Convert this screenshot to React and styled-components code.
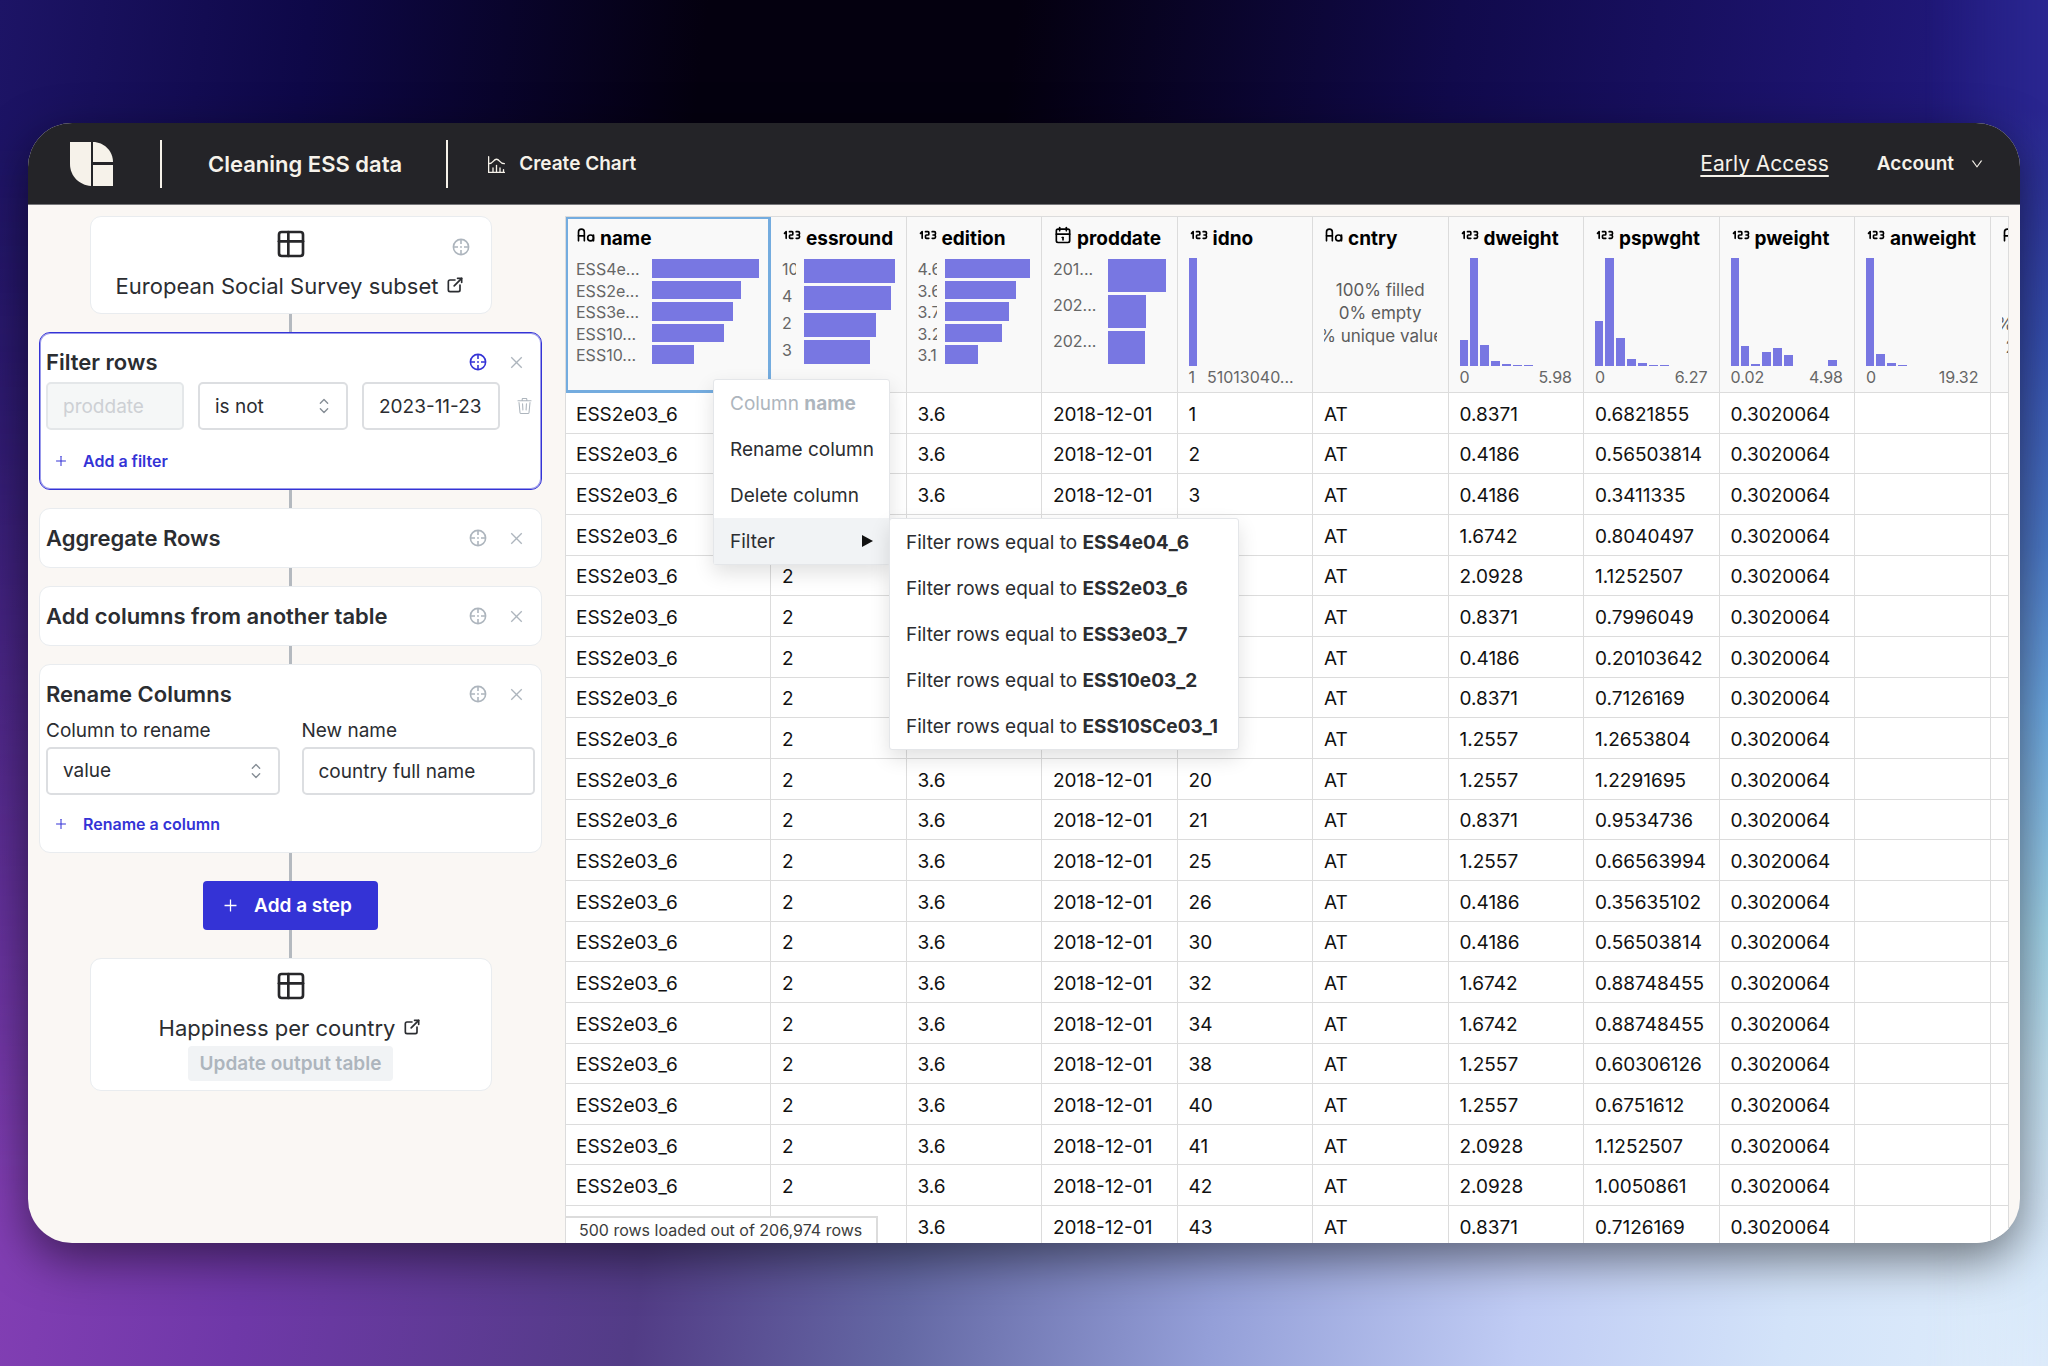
import React, { useState } from "react";
import styled, { createGlobalStyle, css } from "styled-components";
import {
  TbCalendar,
  TbChartHistogram,
  TbExternalLink,
  TbLetterCase,
  TbSelector,
  TbTable,
} from "react-icons/tb";
import { AiOutlineClose, AiOutlineDown, AiOutlinePlus } from "react-icons/ai";
import { GoTrash } from "react-icons/go";

const colors = {
  ink: "#27272a",
  cream: "#f6f2ea",
  text: "#2b2d31",
  muted: "#adb5bd",
  line: "#dcdcdc",
  accent: "#3433d6",
  bar: "#7877e2",
};

const GlobalStyle = createGlobalStyle`
  * { box-sizing: border-box; }
  body { margin: 0; font-family: Inter, "Liberation Sans", sans-serif; color: ${colors.text}; }
  button, input, select { font: inherit; color: inherit; margin: 0; }
`;

/* ---------- page and window ---------- */

const Page = styled.div`
  position: relative;
  display: flex;
  height: 100vh;
  padding: 123px 28px;
  background: linear-gradient(97deg, #8d42ba 0%, #6f38a8 18%, #523c86 36%, #6468a4 48%, #949fd8 62%, #c0ccf4 76%, #d3e3f9 88%, #dfedfb 100%);

  &::before,
  &::after {
    content: "";
    position: absolute;
    inset: 0;
  }

  &::before {
    background: linear-gradient(97deg, #1d1466 0%, #0e0848 14%, #04000f 32%, #04000f 46%, #110a4c 66%, #1d1470 84%, #26228e 100%);
    mask-image: linear-gradient(to bottom, #000 10%, rgba(0, 0, 0, 0.8) 32%, rgba(0, 0, 0, 0.4) 60%, transparent 88%);
  }

  &::after {
    background: linear-gradient(to bottom, #2a2690 8%, #3550b0 25%, #4a7ac8 40%, #6aa8e0 52%, #9fd4e8 68%, #bfe0f0 78%, #d2e6f8 88%, #dceafa 100%);
    mask-image: linear-gradient(to right, transparent 94%, #000 100%);
  }
`;

const Window = styled.div`
  position: relative;
  z-index: 1;
  display: flex;
  flex-direction: column;
  flex: 1;
  min-width: 0;
  overflow: hidden;
  border-radius: 44px;
  background: #faf7f4;
  box-shadow: 0 16px 48px rgba(0, 0, 0, 0.5);
`;

const TopBar = styled.header`
  display: flex;
  align-items: center;
  flex: none;
  height: 82px;
  padding: 1px 36px 0 42px;
  background: #242428;
  border-bottom: 1px solid #77777a;
  color: ${colors.cream};
`;

const Logo = styled.svg`
  width: 43px;
  height: 44px;
  margin-right: 47px;
`;

const BarDivider = styled.span`
  width: 2px;
  height: 48px;
  background: ${colors.cream};
`;

const DocTitle = styled.h1`
  margin: 0 44px 0 46px;
  font-size: 22px;
  line-height: 28px;
  font-weight: 600;
`;

const BarButton = styled.button`
  display: flex;
  align-items: center;
  gap: ${(p) => p.$gap}px;
  padding: 0;
  border: 0;
  background: none;
  font-size: 19px;
  line-height: 28px;
  font-weight: 600;
`;

const ChartButton = styled(BarButton)`
  margin-left: 38px;
`;

const BarEnd = styled.div`
  display: flex;
  align-items: center;
  gap: 48px;
  margin-left: auto;
`;

const BarLink = styled.a`
  color: inherit;
  font-size: 21px;
  line-height: 28px;
  text-underline-offset: 4px;
`;

const Body = styled.div`
  display: grid;
  grid-template-columns: 525px minmax(0, 1fr);
  flex: 1;
  min-height: 0;
  padding: 11px 11px 0 0;
`;

/* ---------- pipeline sidebar ---------- */

const Pipeline = styled.aside`
  display: flex;
  flex-direction: column;
  align-items: center;
`;

const Connector = styled.div`
  flex: none;
  width: 3px;
  height: ${(p) => (p.$long ? 28 : 18)}px;
  background: #b4b9bf;
`;

const card = css`
  background: #fff;
  border: 1px solid #e9ecef;
  border-radius: 11px;
`;

const TableCard = styled.section`
  ${card}
  position: relative;
  display: flex;
  flex-direction: column;
  align-items: center;
  width: 402px;
  padding: 11px 12px 9px;
  color: ${colors.ink};
`;

const CornerAction = styled.div`
  position: absolute;
  top: 15px;
  right: 20px;
`;

const TableLink = styled.a`
  display: flex;
  align-items: center;
  gap: 7px;
  margin-top: 9px;
  font-size: 22px;
  line-height: 35px;
  color: ${colors.text};
  text-decoration: none;
  svg { margin-bottom: 4px; }
`;

const UpdateButton = styled.button`
  padding: 0 12px;
  border: 0;
  border-radius: 4px;
  background: #f1f3f5;
  color: ${colors.muted};
  font-size: 19px;
  line-height: 35px;
  font-weight: 600;
`;

const StepCard = styled.section`
  ${card}
  width: 503px;
  padding: 11px 6px 9px;
  ${(p) => p.$active && css`
    border-color: ${colors.accent};
    box-shadow: inset 0 0 0 1px rgba(52, 51, 214, 0.5);
  `}
`;

const StepHeader = styled.header`
  display: flex;
  align-items: center;
  height: 38px;
  padding: 0 4px 2px 0;
`;

const StepTitle = styled.h2`
  flex: 1;
  margin: 0;
  font-size: 22px;
  line-height: 30px;
  font-weight: 600;
`;

const IconButton = styled.button`
  display: grid;
  place-items: center;
  width: ${(p) => p.$width || 30}px;
  height: 30px;
  padding: 0;
  border: 0;
  background: none;
  color: ${(p) => (p.$active ? colors.accent : colors.muted)};
`;

const RowAction = styled.div`
  display: flex;
  align-items: center;
`;

const HeaderActions = styled.div`
  display: flex;
  gap: 8px;
`;

const FilterRow = styled.div`
  display: grid;
  grid-template-columns: 138px 150px 138px 1fr;
  gap: 14px;
  padding-bottom: 2px;
`;

const RenameRow = styled.div`
  display: grid;
  grid-template-columns: 1fr 1fr;
  gap: 22px;
`;

const Field = styled.label`
  display: block;
  padding-top: 1px;
  font-size: 19px;
  line-height: 32px;
`;

const control = css`
  width: 100%;
  height: 48px;
  padding: 0 15px;
  border: 2px solid #dcdee1;
  border-radius: 5px;
  background: #fff;
  font-size: 19px;
  outline: none;
`;

const TextInput = styled.input`
  ${control}
  display: block;
  &:disabled {
    background: #f5f7f7;
    border-color: #e4e7e9;
    color: #cdd0d4;
  }
`;

const SelectBox = styled.span`
  position: relative;
  display: block;
`;

const Select = styled.select`
  ${control}
  display: block;
  appearance: none;
`;

const SelectMark = styled.span`
  position: absolute;
  top: 0;
  right: 13px;
  display: flex;
  align-items: center;
  height: 100%;
  color: #868e96;
  pointer-events: none;
`;

const AddButton = styled.button`
  display: flex;
  align-items: center;
  gap: 15px;
  height: 38px;
  margin-top: 10px;
  padding: 0 8px;
  border: 0;
  background: none;
  color: ${colors.accent};
  font-size: 16px;
  font-weight: 600;
`;

const AddStepButton = styled.button`
  display: flex;
  align-items: center;
  flex: none;
  gap: 15px;
  height: 49px;
  padding: 0 26px 0 19px;
  border: 0;
  border-radius: 4px;
  background: ${colors.accent};
  color: #fff;
  font-size: 19px;
  font-weight: 600;
`;

/* ---------- data table ---------- */

const TableArea = styled.main`
  position: relative;
  margin-left: 12px;
  min-width: 0;
  min-height: 0;
`;

const TableClip = styled.div`
  height: 100%;
  overflow: hidden;
  border: 1px solid ${colors.line};
  border-bottom: 0;
  background: #fff;
`;

const Table = styled.table`
  width: calc(100% + 118px);
  height: calc(100% + 4px);
  table-layout: fixed;
  border-collapse: separate;
  border-spacing: 0;
  color: #111;
`;

const NameCol = styled.col`
  width: 205px;
`;

const HeadCell = styled.th`
  height: 176px;
  padding: 8px 11px 0 11px;
  vertical-align: top;
  overflow: hidden;
  background: #f9f9f9;
  border-right: 1px solid ${colors.line};
  border-bottom: 1px solid ${colors.line};
  font-weight: 400;
  text-align: left;
  ${(p) => p.$selected && css`
    padding-left: 10px;
    box-shadow: inset 0 0 0 2px #74acdf;
    border-color: #74acdf;
  `}
`;

const HeadTitle = styled.div`
  display: flex;
  align-items: flex-start;
  gap: 4px;
  height: 32px;
  line-height: 27px;
  font-size: 19px;
  font-weight: 700;
  color: #000;
  white-space: nowrap;
  svg { flex: none; }
`;

const Cell = styled.td`
  padding: 4px 10px 0 11px;
  overflow: hidden;
  border-right: 1px solid ${colors.line};
  border-bottom: 1px solid ${colors.line};
  font-size: 19px;
  line-height: 24px;
  white-space: nowrap;
  &:first-child { padding-left: 10px; }
`;

const BarChart = styled.div`
  display: grid;
  grid-template-columns: ${(p) => p.$label}px minmax(0, 1fr);
  grid-auto-rows: minmax(0, 1fr);
  gap: 3px 8px;
  height: 107px;
  padding-top: 2px;
`;

const BarLabel = styled.span`
  align-self: start;
  overflow: hidden;
  font-size: 16px;
  line-height: 21px;
  color: #666;
  white-space: nowrap;
`;

const Bar = styled.span`
  background: ${colors.bar};
`;

const Histogram = styled.div`
  display: grid;
  grid-template-columns: 8px;
  grid-auto-columns: 1fr;
  grid-auto-flow: column;
  align-items: end;
  gap: 2px;
  height: 109px;
  padding-right: 6px;
`;

const Axis = styled.div`
  display: flex;
  justify-content: ${(p) => (p.$packed ? "flex-start" : "space-between")};
  gap: 12px;
  font-size: 16px;
  line-height: 23px;
  color: #666;
  white-space: nowrap;
`;

const Summary = styled.div`
  display: flex;
  flex-direction: column;
  justify-content: center;
  height: 112px;
  font-size: 17px;
  line-height: 23px;
  color: #5c5c5c;
`;

const SummaryLine = styled.span`
  display: flex;
  justify-content: ${(p) => (p.$start ? "flex-start" : "center")};
  padding-left: ${(p) => (p.$start ? 4 : 0)}px;
  height: 23px;
  overflow: hidden;
  white-space: nowrap;
`;

const RowCount = styled.p`
  position: absolute;
  left: 0;
  bottom: 0;
  margin: 0;
  padding: 0 14px 0 13px;
  border: solid ${colors.line};
  border-width: 2px 2px 0 1px;
  background: #fff;
  color: #3c3c3c;
  font-size: 16px;
  line-height: 25px;
`;

/* ---------- column menu ---------- */

const menu = css`
  position: absolute;
  border: 1px solid #e4e6e9;
  border-radius: 3px;
  background: #fff;
  box-shadow: 0 8px 20px rgba(0, 0, 0, 0.12);
`;

const Menu = styled.div`
  ${menu}
  top: 163px;
  left: 148px;
  width: 177px;
`;

const SubMenu = styled.div`
  ${menu}
  top: 0;
  left: 100%;
  min-width: 350px;
`;

const MenuGroup = styled.div`
  position: relative;
`;

const MenuItem = styled.button`
  display: flex;
  align-items: center;
  justify-content: space-between;
  width: 100%;
  height: 46px;
  padding: 0 16px;
  border: 0;
  background: ${(p) => (p.$open ? "#f1f3f5" : "none")};
  color: ${(p) => (p.disabled ? colors.muted : colors.text)};
  font-size: 19px;
  text-align: left;
  white-space: pre;
  b { font-weight: 700; }
`;

const ItemText = styled.span``;

const Arrow = styled.span`
  border: solid transparent;
  border-width: 6px 0 6px 11px;
  border-left-color: #111;
`;

/* ---------- icons ---------- */

function NumberIcon({ size }) {
  return (
    <svg
      width={size}
      height={size}
      viewBox="0 0 24 24"
      fill="none"
      stroke="currentColor"
      strokeWidth="2"
      strokeLinecap="round"
      strokeLinejoin="round"
      aria-hidden="true"
    >
      <path d="M3 10l2 -2v8" />
      <path d="M9 8h3a1 1 0 0 1 1 1v2a1 1 0 0 1 -1 1h-2a1 1 0 0 0 -1 1v2a1 1 0 0 0 1 1h3" />
      <path d="M17 8h2.5a1.5 1.5 0 0 1 1.5 1.5v1a1.5 1.5 0 0 1 -1.5 1.5h-1.5h1.5a1.5 1.5 0 0 1 1.5 1.5v1a1.5 1.5 0 0 1 -1.5 1.5h-2.5" />
    </svg>
  );
}

function TargetIcon() {
  return (
    <svg
      width="18"
      height="18"
      viewBox="0 0 18 18"
      fill="none"
      stroke="currentColor"
      strokeWidth="1.6"
      aria-hidden="true"
    >
      <circle cx="9" cy="9" r="7.6" />
      <path d="M9 1.5V6M9 12V16.5M1.5 9H6M12 9H16.5" />
      <circle cx="9" cy="9" r="0.9" fill="currentColor" stroke="none" />
    </svg>
  );
}

function LogoMark() {
  return (
    <Logo viewBox="0 0 43 44" aria-label="Home" fill={colors.cream}>
      <path d="M0 0H21V44C9 43 0 34 0 22Z" />
      <path d="M23 0C34 0 43 9 43 20H23Z" />
      <path d="M23 23H43V44H23Z" />
    </Logo>
  );
}

/* ---------- data ---------- */

const typeIcons = { text: TbLetterCase, number: NumberIcon, date: TbCalendar };

const columns = [
  { name: "name", type: "text", selected: true, label: 68, bars: [["ESS4e...", 100], ["ESS2e...", 83], ["ESS3e...", 76], ["ESS10...", 67], ["ESS10...", 39]] },
  { name: "essround", type: "number", label: 14, bars: [["10", 100], ["4", 96], ["2", 80], ["3", 73]] },
  { name: "edition", type: "number", label: 19, bars: [["4.6", 100], ["3.6", 84], ["3.7", 76], ["3.2", 67], ["3.1", 39]] },
  { name: "proddate", type: "date", label: 47, bars: [["201...", 100], ["202...", 66], ["202...", 64]] },
  { name: "idno", type: "number", range: ["1", "51013040..."], packed: true, hist: [108, 0, 0, 0, 0, 0, 0, 0, 0, 0] },
  { name: "cntry", type: "text", summary: ["100% filled", "0% empty", "0% unique values"] },
  { name: "dweight", type: "number", range: ["0", "5.98"], hist: [26, 108, 21, 5, 2, 1, 1, 0, 0, 0] },
  { name: "pspwght", type: "number", range: ["0", "6.27"], hist: [45, 108, 28, 7, 3, 1, 1, 0, 0, 0] },
  { name: "pweight", type: "number", range: ["0.02", "4.98"], hist: [108, 20, 2, 14, 18, 11, 0, 0, 0, 6] },
  { name: "anweight", type: "number", range: ["0", "19.32"], hist: [108, 12, 3, 1, 0, 0, 0, 0, 0, 0] },
  { name: "", type: "text", summary: ["", "", "0% unique values"], tail: "2" },
];

const records = [
  [1, "0.8371", "0.6821855"],
  [2, "0.4186", "0.56503814"],
  [3, "0.4186", "0.3411335"],
  [4, "1.6742", "0.8040497"],
  [6, "2.0928", "1.1252507"],
  [7, "0.8371", "0.7996049"],
  [13, "0.4186", "0.20103642"],
  [14, "0.8371", "0.7126169"],
  [18, "1.2557", "1.2653804"],
  [20, "1.2557", "1.2291695"],
  [21, "0.8371", "0.9534736"],
  [25, "1.2557", "0.66563994"],
  [26, "0.4186", "0.35635102"],
  [30, "0.4186", "0.56503814"],
  [32, "1.6742", "0.88748455"],
  [34, "1.6742", "0.88748455"],
  [38, "1.2557", "0.60306126"],
  [40, "1.2557", "0.6751612"],
  [41, "2.0928", "1.1252507"],
  [42, "2.0928", "1.0050861"],
  [43, "0.8371", "0.7126169"],
];

const filterValues = ["ESS4e04_6", "ESS2e03_6", "ESS3e03_7", "ESS10e03_2", "ESS10SCe03_1"];

/* ---------- components ---------- */

function SelectField({ label, value, id }) {
  return (
    <SelectBox>
      <Select id={id} aria-label={label} defaultValue={value}>
        <option>{value}</option>
      </Select>
      <SelectMark>
        <TbSelector size={22} strokeWidth={1.5} />
      </SelectMark>
    </SelectBox>
  );
}

function Step({ title, active, children }) {
  return (
    <StepCard $active={active}>
      <StepHeader>
        <StepTitle>{title}</StepTitle>
        <HeaderActions>
          <IconButton type="button" aria-label={`Preview ${title}`} $active={active}>
            <TargetIcon />
          </IconButton>
          <IconButton type="button" aria-label={`Remove ${title}`}>
            <AiOutlineClose size={17} />
          </IconButton>
        </HeaderActions>
      </StepHeader>
      {children}
    </StepCard>
  );
}

function ColumnHead({ column }) {
  const Icon = typeIcons[column.type];
  return (
    <HeadCell scope="col" $selected={column.selected}>
      <HeadTitle>
        <Icon size={20} />
        {column.name}
      </HeadTitle>
      {column.bars && (
        <BarChart $label={column.label}>
          {column.bars.map(([label, width], i) => (
            <React.Fragment key={i}>
              <BarLabel>{label}</BarLabel>
              <Bar style={{ width: `${width}%` }} />
            </React.Fragment>
          ))}
        </BarChart>
      )}
      {column.hist && (
        <>
          <Histogram>
            {column.hist.map((height, i) => (
              <Bar key={i} style={{ height }} />
            ))}
          </Histogram>
          <Axis $packed={column.packed}>
            <span>{column.range[0]}</span>
            <span>{column.range[1]}</span>
          </Axis>
        </>
      )}
      {column.summary && (
        <Summary>
          {column.summary.map((line, i) => (
            <SummaryLine key={i}>{line}</SummaryLine>
          ))}
          {column.tail && <SummaryLine $start>{column.tail}</SummaryLine>}
        </Summary>
      )}
    </HeadCell>
  );
}

function ColumnMenu() {
  return (
    <Menu role="menu">
      <MenuItem type="button" role="menuitem" disabled>
        <ItemText>Column <b>name</b></ItemText>
      </MenuItem>
      <MenuItem type="button" role="menuitem">Rename column</MenuItem>
      <MenuItem type="button" role="menuitem">Delete column</MenuItem>
      <MenuGroup>
        <MenuItem type="button" role="menuitem" aria-expanded="true" $open>
          Filter
          <Arrow />
        </MenuItem>
        <SubMenu role="menu">
          {filterValues.map((value) => (
            <MenuItem key={value} type="button" role="menuitem">
              <ItemText>Filter rows equal to <b>{value}</b></ItemText>
            </MenuItem>
          ))}
        </SubMenu>
      </MenuGroup>
    </Menu>
  );
}

export default function App() {
  const [date, setDate] = useState("2023-11-23");
  const [newName, setNewName] = useState("country full name");

  return (
    <Page>
      <GlobalStyle />
      <Window>
        <TopBar>
          <LogoMark />
          <BarDivider />
          <DocTitle>Cleaning ESS data</DocTitle>
          <BarDivider />
          <ChartButton type="button" $gap={12}>
            <TbChartHistogram size={21} strokeWidth={1.5} />
            Create Chart
          </ChartButton>
          <BarEnd>
            <BarLink href="#early-access">Early Access</BarLink>
            <BarButton type="button" $gap={16}>
              Account
              <AiOutlineDown size={14} />
            </BarButton>
          </BarEnd>
        </TopBar>

        <Body>
          <Pipeline>
            <TableCard>
              <TbTable size={32} />
              <CornerAction>
                <IconButton type="button" $width={20} aria-label="Preview source table">
                  <TargetIcon />
                </IconButton>
              </CornerAction>
              <TableLink href="#source">
                European Social Survey subset
                <TbExternalLink size={20} />
              </TableLink>
            </TableCard>
            <Connector />

            <Step title="Filter rows" active>
              <FilterRow>
                <TextInput aria-label="Column" value="proddate" disabled readOnly />
                <SelectField label="Condition" value="is not" />
                <TextInput aria-label="Value" value={date} onChange={(e) => setDate(e.target.value)} />
                <RowAction>
                  <IconButton type="button" $width={20} aria-label="Delete filter">
                    <GoTrash size={17} />
                  </IconButton>
                </RowAction>
              </FilterRow>
              <AddButton type="button">
                <AiOutlinePlus size={14} />
                Add a filter
              </AddButton>
            </Step>
            <Connector />
            <Step title="Aggregate Rows" />
            <Connector />
            <Step title="Add columns from another table" />
            <Connector />
            <Step title="Rename Columns">
              <RenameRow>
                <Field htmlFor="rename-column">
                  Column to rename
                  <SelectField id="rename-column" label="Column to rename" value="value" />
                </Field>
                <Field>
                  New name
                  <TextInput value={newName} onChange={(e) => setNewName(e.target.value)} />
                </Field>
              </RenameRow>
              <AddButton type="button">
                <AiOutlinePlus size={14} />
                Rename a column
              </AddButton>
            </Step>
            <Connector $long />
            <AddStepButton type="button">
              <AiOutlinePlus size={17} />
              Add a step
            </AddStepButton>
            <Connector $long />
            <TableCard>
              <TbTable size={32} />
              <TableLink href="#output">
                Happiness per country
                <TbExternalLink size={20} />
              </TableLink>
              <UpdateButton type="button" disabled>Update output table</UpdateButton>
            </TableCard>
          </Pipeline>

          <TableArea>
            <TableClip>
              <Table>
                <colgroup>
                  <NameCol />
                  {columns.slice(1).map((column) => (
                    <col key={column.name} />
                  ))}
                </colgroup>
                <thead>
                  <tr>
                    {columns.map((column) => (
                      <ColumnHead key={column.name} column={column} />
                    ))}
                  </tr>
                </thead>
                <tbody>
                  {records.map(([id, dweight, pspwght]) => (
                    <tr key={id}>
                      <Cell>ESS2e03_6</Cell>
                      <Cell>2</Cell>
                      <Cell>3.6</Cell>
                      <Cell>2018-12-01</Cell>
                      <Cell>{id}</Cell>
                      <Cell>AT</Cell>
                      <Cell>{dweight}</Cell>
                      <Cell>{pspwght}</Cell>
                      <Cell>0.3020064</Cell>
                      <Cell />
                      <Cell />
                    </tr>
                  ))}
                </tbody>
              </Table>
            </TableClip>
            <RowCount>500 rows loaded out of 206,974 rows</RowCount>
            <ColumnMenu />
          </TableArea>
        </Body>
      </Window>
    </Page>
  );
}
